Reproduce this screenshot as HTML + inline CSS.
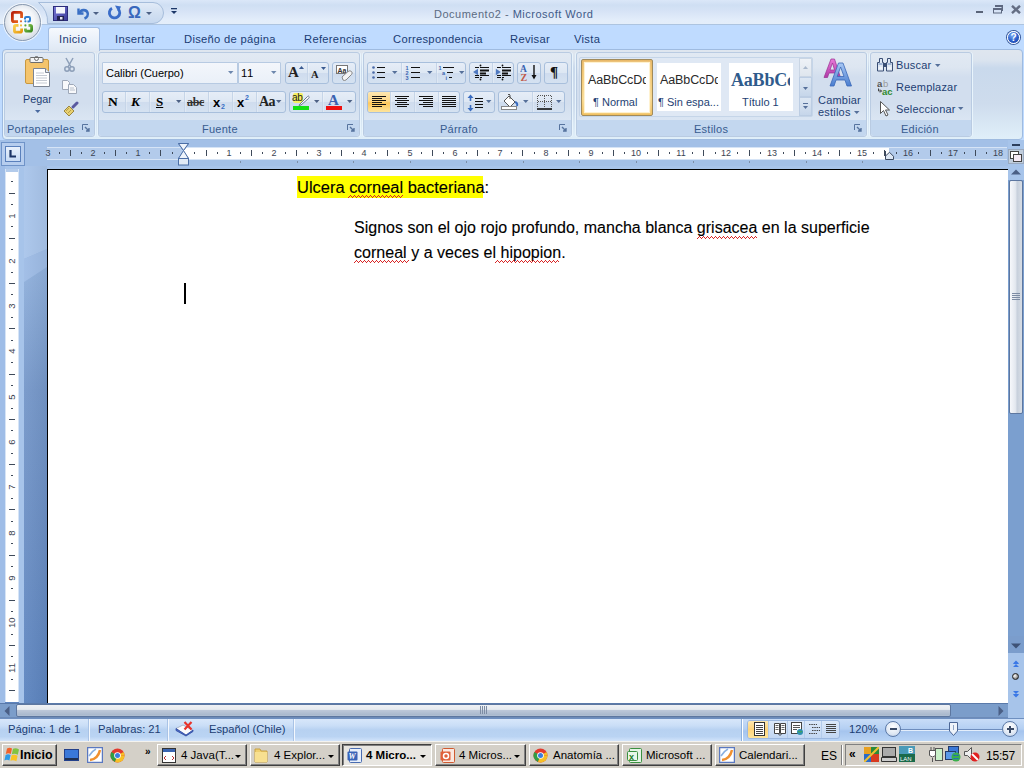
<!DOCTYPE html>
<html><head><meta charset="utf-8">
<style>
*{margin:0;padding:0;box-sizing:border-box}
html,body{width:1024px;height:768px;overflow:hidden;background:#bfdbff;font-family:"Liberation Sans",sans-serif;position:relative}
.a{position:absolute}
#title{left:0;top:0;width:1024px;height:25px;background:linear-gradient(#dbe7f8 0,#cfdff3 5px,#d6e3f6 11px,#e3edfa 20px,#e4eefa 24px);border-bottom:1px solid #adc4e0}
#tabs{left:0;top:25px;width:1024px;height:25px;background:#bfdbff}
#ribbon{left:2px;top:49px;width:1021px;height:91px;border:1px solid #9fbbe0;border-radius:4px;background:linear-gradient(#dfe6ef 0,#dbe4ef 10px,#c9d9ec 18px,#cedced 60%,#e0eff9 100%)}
#below{left:0;top:140px;width:1024px;height:26px;background:#a3c0e7}
#docbg{left:0;top:166px;width:1008px;height:537px;background:linear-gradient(#a8c4ea 0,#93b2de 22%,#7597c9 47%,#6a8ec4 70%,#5c84bf 100%);border-left:5px solid #9fbde7}
#page{left:47px;top:169px;width:961px;height:534px;background:#fff;border-left:1px solid #000;border-top:1px solid #000}
#vscroll{left:1008px;top:140px;width:16px;height:578px;background:#a7c4ea}
#hscroll{left:0;top:703px;width:1008px;height:15px;background:#7b9dca;border-top:1px solid #5a7aaa;border-bottom:1px solid #6d8bb8}
#status{left:0;top:718px;width:1024px;height:23px;background:linear-gradient(#d8e7fa 0,#cadef7 30%,#b7d1f1 50%,#bad4f3 80%,#d2e4fb 100%);border-top:1px solid #6e8fc0}
#taskbar{left:0;top:741px;width:1024px;height:27px;background:#d4d0c8;border-top:1px solid #f4f3ef}
.doc{font-family:"Liberation Sans",sans-serif;font-size:15.8px;color:#000;white-space:nowrap;line-height:20px;transform-origin:0 0;-webkit-text-stroke:0.1px #000}
.grp{top:52px;height:85px;border:1px solid #b9cbe2;border-radius:3px;background:linear-gradient(#e1e9f3 0,#dde6f1 14px,#d2deee 24px,#d2deee 50px,#dbe6f3 68px);box-shadow:1px 0 0 #e8f4fc,-1px 0 0 #e8f4fc}
.glab{position:absolute;left:0;right:0;bottom:0;height:16px;background:#c3d7ef;border-radius:0 0 3px 3px}
.gl{top:123px;font-size:11px;letter-spacing:0.25px;color:#375b90;white-space:nowrap}
.combo{height:22px;border:1px solid #b7cae2;background:linear-gradient(#f3f6fb,#eaf0f8);border-radius:1px}
.strip{border:1px solid #a8bfdc;border-radius:3px;background:linear-gradient(#e6edf7 0,#dde7f3 48%,#cfdcee 52%,#d5e2f1 100%)}
.sep{width:1px;background:#c6d5e8;box-shadow:1px 0 0 rgba(255,255,255,.25)}
.sty{top:73px;height:18px;overflow:hidden;white-space:nowrap;font-size:12.5px;color:#2a2a2a;letter-spacing:-0.1px}
.styl{top:96px;font-size:11px;color:#1e3f73;white-space:nowrap}
.edt{left:896px;font-size:11px;color:#1e3f73;letter-spacing:0.2px;white-space:nowrap}
.rn{top:148px;width:20px;text-align:center;font-size:9px;color:#3b4352;line-height:11px}
.rnv{left:7px;width:10px;text-align:center;font-size:9.5px;color:#3b4352;line-height:10px;transform:rotate(-90deg)}
.stx{top:723px;font-size:11.2px;color:#1b3d73;white-space:nowrap}
.ssep{top:719px;width:2px;height:22px;border-left:1px solid #a9c3e6;border-right:1px solid #f4f8fd}
.zc{top:721px;width:16px;height:16px;border-radius:50%;border:1px solid #5c7aa8;background:radial-gradient(circle at 50% 35%,#fff,#dfe8f4 60%,#b5c8e2)}
.tbtn{top:744px;height:22px;border:1px solid;border-color:#fff #404040 #404040 #fff;box-shadow:inset -1px -1px 0 #808080;background:#d4d0c8}
.tbtn.act{border-color:#404040 #fff #fff #404040;box-shadow:inset 1px 1px 0 #808080;background:#e8e6e1}
.ttx{top:749px;font-size:11.5px;color:#000;white-space:nowrap}
.tab{top:33px;font-size:11.2px;letter-spacing:0.3px;color:#1a3b74;white-space:nowrap}
.wavy{text-decoration:underline wavy #e02020;text-decoration-thickness:1px;text-underline-offset:3px}
</style></head><body>
<div id="title" class="a"></div>
<div id="tabs" class="a"></div>
<div id="ribbon" class="a"></div>
<div id="below" class="a"></div>
<div id="docbg" class="a"></div>
<div id="page" class="a"></div>
<div id="vscroll" class="a"></div>
<div id="hscroll" class="a"></div>
<div id="status" class="a"></div>
<div id="taskbar" class="a"></div>


<!-- ribbon groups -->
<div class="a grp" style="left:4px;width:91px"><div class="glab"></div></div>
<div class="a gl" style="left:7px">Portapapeles</div>
<svg class="a" style="left:82px;top:124px" width="8" height="8" viewBox="0 0 8 8"><path d="M0.5 6V0.5H6" fill="none" stroke="#56739e"/><path d="M3 3L7 7M4 7h3V4" fill="none" stroke="#56739e" stroke-width="1.4"/></svg>
<div class="a grp" style="left:98px;width:262px"><div class="glab"></div></div>
<div class="a gl" style="left:202px">Fuente</div>
<svg class="a" style="left:347px;top:124px" width="8" height="8" viewBox="0 0 8 8"><path d="M0.5 6V0.5H6" fill="none" stroke="#56739e"/><path d="M3 3L7 7M4 7h3V4" fill="none" stroke="#56739e" stroke-width="1.4"/></svg>
<div class="a grp" style="left:363px;width:209px"><div class="glab"></div></div>
<div class="a gl" style="left:440px">Párrafo</div>
<svg class="a" style="left:559px;top:124px" width="8" height="8" viewBox="0 0 8 8"><path d="M0.5 6V0.5H6" fill="none" stroke="#56739e"/><path d="M3 3L7 7M4 7h3V4" fill="none" stroke="#56739e" stroke-width="1.4"/></svg>
<div class="a grp" style="left:576px;width:291px"><div class="glab"></div></div>
<div class="a gl" style="left:694px">Estilos</div>
<svg class="a" style="left:854px;top:124px" width="8" height="8" viewBox="0 0 8 8"><path d="M0.5 6V0.5H6" fill="none" stroke="#56739e"/><path d="M3 3L7 7M4 7h3V4" fill="none" stroke="#56739e" stroke-width="1.4"/></svg>
<div class="a grp" style="left:870px;width:102px"><div class="glab"></div></div>
<div class="a gl" style="left:901px">Edición</div>

<!-- Portapapeles content -->
<svg class="a" style="left:24px;top:56px" width="28" height="32" viewBox="0 0 28 32">
<rect x="1.5" y="3.5" width="23" height="24" rx="1.5" fill="#f4c46c" stroke="#c9983f"/>
<rect x="6" y="1.5" width="13" height="5" rx="1" fill="#f4f4f4" stroke="#6d6d6d"/>
<circle cx="12.5" cy="2.5" r="2" fill="none" stroke="#6d6d6d"/>
<path d="M9.5 12.5h12l4 4v14h-16z" fill="#fff" stroke="#7c8594"/>
<path d="M21.5 12.5v4h4" fill="#e8ecf2" stroke="#7c8594"/>
<path d="M12 17h8M12 19.5h11M12 22h11M12 24.5h11M12 27h11" stroke="#c5cad2" stroke-width="1"/>
</svg>
<div class="a" style="left:23px;top:93px;font-size:10.8px;color:#1e3f73">Pegar</div>
<svg class="a" style="left:35px;top:110px" width="6" height="3"><path d="M0 0h5.5L2.75 3z" fill="#4a6aa0"/></svg>
<svg class="a" style="left:64px;top:57px" width="11" height="15" viewBox="0 0 11 15"><path d="M2 1L7 10M9 1L4 10" stroke="#8d9fb8" stroke-width="1.5"/><circle cx="3" cy="12" r="2.2" fill="none" stroke="#8d9fb8" stroke-width="1.5"/><circle cx="8" cy="12" r="2.2" fill="none" stroke="#8d9fb8" stroke-width="1.5"/></svg>
<svg class="a" style="left:62px;top:80px" width="16" height="14" viewBox="0 0 16 14"><path d="M0.5 0.5h5l2 2v7h-7z" fill="#f8f9fb" stroke="#9ea8b8"/><path d="M6.5 4.5h5l3 3v6h-8z" fill="#f8f9fb" stroke="#9ea8b8"/><path d="M8 8h4M8 10h5" stroke="#b8c0cc"/></svg>
<svg class="a" style="left:63px;top:101px" width="16" height="16" viewBox="0 0 16 16"><path d="M10 6L14 2" stroke="#5a5aa0" stroke-width="3" stroke-linecap="round"/><path d="M1 10L6 5 11 10 6 15z" fill="#e8d070" stroke="#9a8640"/><path d="M3 10L6 7M5 12L8 9" stroke="#b8a048"/></svg>

<!-- Fuente content -->
<div class="a combo" style="left:102px;top:62px;width:136px"></div>
<div class="a" style="left:106px;top:67px;font-size:11px;color:#000;white-space:nowrap">Calibri (Cuerpo)</div>
<svg class="a" style="left:228px;top:71px" width="6" height="3"><path d="M0 0h5.5L2.75 3z" fill="#6d87ad"/></svg>
<div class="a combo" style="left:238px;top:62px;width:43px"></div>
<div class="a" style="left:241px;top:67px;font-size:11.3px;color:#000;letter-spacing:0.6px">11</div>
<svg class="a" style="left:271px;top:71px" width="6" height="3"><path d="M0 0h5.5L2.75 3z" fill="#6d87ad"/></svg>
<div class="a strip" style="left:102px;top:91px;width:184px;height:22px"></div>
<div class="a sep" style="left:125px;top:92px;height:20px"></div>
<div class="a sep" style="left:149px;top:92px;height:20px"></div>
<div class="a sep" style="left:184px;top:92px;height:20px"></div>
<div class="a sep" style="left:208px;top:92px;height:20px"></div>
<div class="a sep" style="left:232px;top:92px;height:20px"></div>
<div class="a sep" style="left:256px;top:92px;height:20px"></div>
<div class="a" style="left:108px;top:94px;font-family:'Liberation Serif',serif;font-weight:bold;font-size:13.5px;color:#000">N</div>
<div class="a" style="left:131px;top:94px;font-family:'Liberation Serif',serif;font-weight:bold;font-style:italic;font-size:13.5px;color:#000">K</div>
<div class="a" style="left:156px;top:94px;font-family:'Liberation Serif',serif;font-weight:bold;font-size:13px;color:#000;text-decoration:underline;text-underline-offset:1px">S</div>
<svg class="a" style="left:176px;top:100px" width="6" height="3"><path d="M0 0h5.5L2.75 3z" fill="#4d6185"/></svg>
<div class="a" style="left:187px;top:95px;font-family:'Liberation Serif',serif;font-weight:bold;font-size:12px;color:#333;text-decoration:line-through;letter-spacing:-0.3px">abc</div>
<div class="a" style="left:213px;top:95px;font-weight:bold;font-size:13px;color:#000">x</div><div class="a" style="left:221px;top:103px;font-weight:bold;font-size:7px;color:#3a6fc4">2</div>
<div class="a" style="left:237px;top:95px;font-weight:bold;font-size:13px;color:#000">x</div><div class="a" style="left:245px;top:94px;font-weight:bold;font-size:7px;color:#3a6fc4">2</div>
<div class="a" style="left:259px;top:94px;font-family:'Liberation Serif',serif;font-weight:bold;font-size:14px;color:#222;letter-spacing:-0.5px">Aa</div>
<svg class="a" style="left:276px;top:100px" width="6" height="3"><path d="M0 0h5.5L2.75 3z" fill="#4d6185"/></svg>
<div class="a strip" style="left:285px;top:62px;width:44px;height:22px"></div>
<div class="a sep" style="left:307px;top:63px;height:20px"></div>
<div class="a" style="left:288px;top:64px;font-family:'Liberation Serif',serif;font-weight:bold;font-size:15px;color:#222">A</div>
<svg class="a" style="left:299px;top:66px" width="5" height="3"><path d="M0 3h5L2.5 0z" fill="#3a5a90"/></svg>
<div class="a" style="left:311px;top:69px;font-family:'Liberation Serif',serif;font-weight:bold;font-size:10.5px;color:#222">A</div>
<svg class="a" style="left:321px;top:67px" width="5" height="3"><path d="M0 0h5L2.5 3z" fill="#3a5a90"/></svg>
<div class="a strip" style="left:332px;top:62px;width:24px;height:22px"></div>
<svg class="a" style="left:335px;top:64px" width="19" height="17" viewBox="0 0 19 17"><rect x="1.5" y="1.5" width="11" height="8" fill="#fff" stroke="#777"/><text x="2.5" y="8.5" font-size="7" font-family="Liberation Sans" font-weight="bold" fill="#333">Aa</text><path d="M7 13L13 7.5Q15 6 16.5 7.5Q18 9 16.5 10.5L11 16Q9 17 8 16z" fill="#f4f4f4" stroke="#888"/></svg>
<div class="a strip" style="left:289px;top:91px;width:67px;height:22px"></div>
<div class="a sep" style="left:322px;top:92px;height:20px"></div>
<div class="a" style="left:293px;top:93px;width:10px;height:10px;background:#f6f060;border-radius:2px"></div>
<div class="a" style="left:292px;top:92px;font-size:10px;color:#222;letter-spacing:-0.4px">ab</div>
<svg class="a" style="left:298px;top:94px" width="12" height="12" viewBox="0 0 12 12"><path d="M2 10L9.5 2.5Q10.5 1.5 11 2.5Q11.5 3.5 10.5 4.5L3 11L1 11.5z" fill="#fff" stroke="#6a7a90"/></svg>
<div class="a" style="left:293px;top:106px;width:16px;height:4px;background:#14e014"></div>
<svg class="a" style="left:314px;top:100px" width="6" height="3"><path d="M0 0h5.5L2.75 3z" fill="#4d6185"/></svg>
<div class="a" style="left:328px;top:92px;font-family:'Liberation Serif',serif;font-size:15px;font-weight:bold;color:#3a62b0">A</div>
<div class="a" style="left:326px;top:106px;width:16px;height:4px;background:#ee1010"></div>
<svg class="a" style="left:347px;top:100px" width="6" height="3"><path d="M0 0h5.5L2.75 3z" fill="#4d6185"/></svg>

<!-- Parrafo content -->
<div class="a strip" style="left:367px;top:62px;width:99px;height:22px"></div>
<div class="a sep" style="left:401px;top:63px;height:20px"></div><div class="a sep" style="left:436px;top:63px;height:20px"></div>
<svg class="a" style="left:372px;top:66px" width="14" height="13" viewBox="0 0 14 13"><circle cx="1.5" cy="1.5" r="1.3" fill="#4a6aa8"/><circle cx="1.5" cy="6.5" r="1.3" fill="#4a6aa8"/><circle cx="1.5" cy="11.5" r="1.3" fill="#4a6aa8"/><path d="M5 1.5h8M5 6.5h8M5 11.5h8" stroke="#111" stroke-width="1.2"/></svg>
<svg class="a" style="left:392px;top:71px" width="6" height="3"><path d="M0 0h5.5L2.75 3z" fill="#56709a"/></svg>
<svg class="a" style="left:405px;top:65px" width="16" height="15" viewBox="0 0 16 15"><text x="0.5" y="5" font-size="5.5" font-weight="bold" font-family="Liberation Sans" fill="#3a64b0">1</text><text x="0.5" y="10" font-size="5.5" font-weight="bold" font-family="Liberation Sans" fill="#3a64b0">2</text><text x="0.5" y="15" font-size="5.5" font-weight="bold" font-family="Liberation Sans" fill="#3a64b0">3</text><path d="M6 2.5h9M6 7.5h9M6 12.5h9" stroke="#111" stroke-width="1"/></svg>
<svg class="a" style="left:427px;top:71px" width="6" height="3"><path d="M0 0h5.5L2.75 3z" fill="#56709a"/></svg>
<svg class="a" style="left:438px;top:65px" width="17" height="15" viewBox="0 0 17 15"><text x="0.5" y="5" font-size="5.5" font-weight="bold" font-family="Liberation Sans" fill="#3a64b0">1</text><text x="4" y="10" font-size="5.5" font-weight="bold" font-family="Liberation Sans" fill="#3a64b0">a</text><text x="7.5" y="15" font-size="5.5" font-weight="bold" font-family="Liberation Sans" fill="#3a64b0">i</text><path d="M5 2.5h11M9 7.5h6M11 12.5h3" stroke="#111" stroke-width="1"/></svg>
<svg class="a" style="left:459px;top:71px" width="6" height="3"><path d="M0 0h5.5L2.75 3z" fill="#56709a"/></svg>
<div class="a strip" style="left:469px;top:62px;width:45px;height:22px"></div><div class="a sep" style="left:492px;top:63px;height:20px"></div>
<svg class="a" style="left:473px;top:64px" width="17" height="17" viewBox="0 0 17 17"><circle cx="7.5" cy="1.5" r="0.9" fill="#111"/><circle cx="7.5" cy="15.5" r="0.9" fill="#111"/><path d="M2 3.5h4M2 11.5h4M2 13.5h4M7 3.5h9M7 11.5h9M7 13.5h2" stroke="#111" stroke-width="1"/><path d="M7 6.5h9M7 9.5h6" stroke="#111" stroke-width="2"/><path d="M0 8L5 4.8V11.2z" fill="#4f79c0"/></svg>
<svg class="a" style="left:495px;top:64px" width="17" height="17" viewBox="0 0 17 17"><circle cx="7.5" cy="1.5" r="0.9" fill="#111"/><circle cx="7.5" cy="15.5" r="0.9" fill="#111"/><path d="M2 3.5h4M2 11.5h4M2 13.5h4M7 3.5h9M7 11.5h9M7 13.5h2" stroke="#111" stroke-width="1"/><path d="M7 6.5h9M7 9.5h6" stroke="#111" stroke-width="2"/><path d="M5.8 8L0.8 4.8V11.2z" fill="#4f79c0"/></svg>
<div class="a strip" style="left:517px;top:62px;width:24px;height:22px"></div>
<svg class="a" style="left:520px;top:64px" width="18" height="18" viewBox="0 0 18 18"><text x="0" y="8" font-size="9.5" font-weight="bold" font-family="Liberation Serif" fill="#3a64b0">A</text><text x="0.5" y="17" font-size="10" font-weight="bold" font-family="Liberation Serif" fill="#c05a48">Z</text><path d="M14 1v13" stroke="#111" stroke-width="1.4"/><path d="M11.5 11l2.5 4.5 2.5-4.5z" fill="#111"/></svg>
<div class="a strip" style="left:544px;top:62px;width:24px;height:22px"></div>
<div class="a" style="left:550px;top:64px;font-family:'Liberation Serif',serif;font-size:15px;font-weight:bold;color:#111">&#182;</div>
<div class="a strip" style="left:367px;top:91px;width:93px;height:22px"></div>
<div class="a" style="left:368px;top:92px;width:22px;height:20px;background:linear-gradient(#fde7b0 0,#fdd88a 45%,#ffc85a 55%,#fde49c 100%);border-radius:2px 0 0 2px"></div>
<div class="a sep" style="left:390px;top:92px;height:20px"></div><div class="a sep" style="left:414px;top:92px;height:20px"></div><div class="a sep" style="left:438px;top:92px;height:20px"></div>
<svg class="a" style="left:372px;top:96px" width="15" height="12"><path d="M0 0.5h14M0 2.5h10M0 4.5h14M0 6.5h10M0 8.5h14M0 10.5h10" stroke="#111" stroke-width="1"/></svg>
<svg class="a" style="left:395px;top:96px" width="15" height="12"><path d="M0 0.5h14M2 2.5h10M0 4.5h14M2 6.5h10M0 8.5h14M2 10.5h10" stroke="#111" stroke-width="1"/></svg>
<svg class="a" style="left:419px;top:96px" width="15" height="12"><path d="M0 0.5h14M4 2.5h10M0 4.5h14M4 6.5h10M0 8.5h14M4 10.5h10" stroke="#111" stroke-width="1"/></svg>
<svg class="a" style="left:442px;top:96px" width="15" height="12"><path d="M0 0.5h14M0 2.5h14M0 4.5h14M0 6.5h14M0 8.5h14M0 10.5h14" stroke="#111" stroke-width="1"/></svg>
<div class="a strip" style="left:463px;top:91px;width:32px;height:22px"></div>
<svg class="a" style="left:467px;top:94px" width="17" height="18" viewBox="0 0 17 18"><path d="M3.5 3v4M3.5 11v4" stroke="#3a6cc0" stroke-width="1.6"/><path d="M0.5 4L3.5 0.5 6.5 4zM0.5 14L3.5 17.5 6.5 14z" fill="#3a6cc0"/><path d="M8 4.5h8M8 7.5h8M8 10.5h8M8 13.5h8" stroke="#111" stroke-width="1.2"/></svg>
<svg class="a" style="left:486px;top:100px" width="6" height="3"><path d="M0 0h5.5L2.75 3z" fill="#56709a"/></svg>
<div class="a strip" style="left:498px;top:91px;width:67px;height:22px"></div><div class="a sep" style="left:532px;top:92px;height:20px"></div>
<svg class="a" style="left:501px;top:93px" width="18" height="18" viewBox="0 0 18 18"><path d="M3 8L8 3l6 6-5 5z" fill="#fff" stroke="#555"/><path d="M7 2q1-2 2 0v4" fill="none" stroke="#555"/><path d="M14 9q3 1 2 4" fill="none" stroke="#3a6cc0" stroke-width="2"/><rect x="0.5" y="13.5" width="15" height="3" fill="#fff" stroke="#888"/></svg>
<svg class="a" style="left:523px;top:100px" width="6" height="3"><path d="M0 0h5.5L2.75 3z" fill="#56709a"/></svg>
<svg class="a" style="left:537px;top:95px" width="15" height="15" viewBox="0 0 15 15"><path d="M0.5 1v12M7.5 1v12M14.5 1v12M1 0.5h13M1 6.5h13" stroke="#555" stroke-width="1" stroke-dasharray="1 1" fill="none"/><path d="M0 14h15" stroke="#111" stroke-width="1.6"/></svg>
<svg class="a" style="left:556px;top:100px" width="6" height="3"><path d="M0 0h5.5L2.75 3z" fill="#56709a"/></svg>

<!-- Estilos content -->
<div class="a" style="left:579px;top:57px;width:234px;height:60px;border:1px solid #c5d5e8;border-radius:2px;background:#dfe8f4"></div>
<div class="a" style="left:581px;top:59px;width:72px;height:57px;border-radius:2px;border:1px solid #a08a5c;background:linear-gradient(#e8b868,#f3c874 30%,#f8d890 70%,#f0c060);"></div>
<div class="a" style="left:585px;top:63px;width:64px;height:49px;background:#fff;box-shadow:0 0 1px 1px #fff2d0"></div>
<div class="a sty" style="left:585px;width:61px"><span style="margin-left:3px">AaBbCcDd</span></div>
<div class="a styl" style="left:593px">&#182; Normal</div>
<div class="a" style="left:657px;top:63px;width:64px;height:48px;background:#fff"></div>
<div class="a sty" style="left:657px;width:61px"><span style="margin-left:3px">AaBbCcDd</span></div>
<div class="a styl" style="left:658px">&#182; Sin espa...</div>
<div class="a" style="left:729px;top:63px;width:64px;height:48px;background:#fff"></div>
<div class="a" style="left:729px;top:70px;width:61px;height:22px;overflow:hidden;white-space:nowrap"><span style="margin-left:2px;font-family:'Liberation Serif',serif;font-weight:bold;font-size:18px;color:#2f5b8c;letter-spacing:-0.2px">AaBbCc</span></div>
<div class="a styl" style="left:742px">Título 1</div>
<div class="a" style="left:799px;top:58px;width:14px;height:58px;border-left:1px solid #c5d5e8"></div>
<div class="a" style="left:799px;top:58px;width:13px;height:19px;background:linear-gradient(#eef2f7,#dfe6ee);border:1px solid #c9d5e4"></div>
<svg class="a" style="left:803px;top:66px" width="5" height="3"><path d="M0 3h5L2.5 0z" fill="#a9b8cc"/></svg>
<div class="a" style="left:799px;top:77px;width:13px;height:20px;background:linear-gradient(#dde7f3,#c6d6ea);border:1px solid #bccde3"></div>
<svg class="a" style="left:803px;top:87px" width="5" height="3"><path d="M0 0h5L2.5 3z" fill="#56709a"/></svg>
<div class="a" style="left:799px;top:97px;width:13px;height:19px;background:linear-gradient(#dde7f3,#c6d6ea);border:1px solid #bccde3"></div>
<svg class="a" style="left:803px;top:103px" width="5" height="7"><rect x="0" y="0" width="5" height="1" fill="#56709a"/><path d="M0 3h5L2.5 6z" fill="#56709a"/></svg>
<svg class="a" style="left:823px;top:58px" width="32" height="29" viewBox="0 0 32 29"><defs><linearGradient id="pa" x1="0" y1="0" x2="0" y2="1"><stop offset="0" stop-color="#e87ad8"/><stop offset="1" stop-color="#b03aa8"/></linearGradient><linearGradient id="ba" x1="0" y1="0" x2="0" y2="1"><stop offset="0" stop-color="#a8c8f4"/><stop offset="1" stop-color="#4a7ed0"/></linearGradient></defs>
<path d="M1 19.5L8 1h3.5l6 18.5h-3.5l-1.5-4.5H6l-1.5 4.5zM7 12h4.5L9.5 5z" fill="url(#pa)" stroke="#9a3090" stroke-width="0.7"/>
<path d="M7 28L15.5 5h4.5L28.5 28h-4.5l-2-6H13l-2 6zM14.2 18.5h6.8L17.6 9z" fill="url(#ba)" stroke="#3a68b8" stroke-width="0.8"/></svg>
<div class="a" style="left:818px;top:94px;font-size:11px;letter-spacing:0.2px;color:#1e3f73">Cambiar</div>
<div class="a" style="left:818px;top:106px;font-size:11px;letter-spacing:0.2px;color:#1e3f73">estilos</div>
<svg class="a" style="left:854px;top:111px" width="6" height="3"><path d="M0 0h5.5L2.75 3z" fill="#56709a"/></svg>

<!-- Edicion content -->
<svg class="a" style="left:877px;top:57px" width="16" height="15" viewBox="0 0 16 15"><path d="M2.5 1.5h3v4h1v8.5h-6V5.5h2z" fill="#dfe8f4" stroke="#3a4f75"/><path d="M10.5 1.5h3v4h2v8.5h-6V5.5h1z" fill="#dfe8f4" stroke="#3a4f75"/><rect x="6.5" y="6" width="3" height="4" fill="#3a4f75"/><path d="M1.5 7h4M10.5 7h4" stroke="#8aa4cc" stroke-width="1.5"/><path d="M1.5 11h4M10.5 11h4" stroke="#ffffff"/></svg>
<div class="a edt" style="top:59px">Buscar</div>
<svg class="a" style="left:935px;top:64px" width="6" height="3"><path d="M0 0h5.5L2.75 3z" fill="#56709a"/></svg>
<svg class="a" style="left:877px;top:79px" width="18" height="16" viewBox="0 0 18 16"><text x="0" y="8" font-size="9.5" font-family="Liberation Sans" font-weight="bold" fill="#555">a</text><text x="6" y="8" font-size="9.5" font-family="Liberation Sans" fill="#9a9a9a">b</text><text x="5" y="15.5" font-size="9.5" font-family="Liberation Sans" font-weight="bold" fill="#2f8a2f">ac</text><path d="M1.5 9.5v2.5h3M3 10.5l1.5 1.5-1.5 1.5" fill="none" stroke="#444" stroke-width="1"/></svg>
<div class="a edt" style="top:81px">Reemplazar</div>
<svg class="a" style="left:880px;top:101px" width="10" height="16" viewBox="0 0 10 16"><path d="M0.5 0.5v12l3-3 2.5 5.5 2-1-2.5-5H9.5z" fill="#fff" stroke="#555"/></svg>
<div class="a edt" style="top:103px">Seleccionar</div>
<svg class="a" style="left:958px;top:107px" width="6" height="3"><path d="M0 0h5.5L2.75 3z" fill="#56709a"/></svg>

<svg class="a" style="left:24px;top:166px" width="23" height="537" viewBox="0 0 23 537"><defs><linearGradient id="dbg" x1="0" y1="0" x2="0" y2="1"><stop offset="0" stop-color="#93b3de"/><stop offset="0.3" stop-color="#7597c9"/><stop offset="0.65" stop-color="#6a8ec4"/><stop offset="1" stop-color="#5c84bf"/></linearGradient><linearGradient id="dbh" x1="0" y1="0" x2="1" y2="0"><stop offset="0" stop-color="#fff" stop-opacity="0.05"/><stop offset="1" stop-color="#000" stop-opacity="0.05"/></linearGradient></defs>
<rect x="0" y="90" width="23" height="447" fill="url(#dbg)"/>
<path d="M0 0H23V83L0 93z" fill="#a9c5eb"/>
<path d="M0 93L23 83V101L0 116z" fill="#9ebce6"/>
<rect x="0" y="0" width="23" height="537" fill="url(#dbh)"/></svg>
<!-- ruler -->
<div class="a" style="left:1px;top:142px;width:24px;height:24px;border:1px solid #6f93c8;background:#b6cdee"></div>
<div class="a" style="left:5px;top:146px;width:16px;height:16px;border:1px solid #5a80bc;background:linear-gradient(#e9f1fc,#c8dbf4)"></div>
<svg class="a" style="left:9px;top:150px" width="8" height="8"><path d="M1.5 0v6.5H7" fill="none" stroke="#1d3566" stroke-width="2.2"/></svg>
<div class="a" style="left:47px;top:147px;width:960px;height:13px;background:#b3cbeb;border-top:1px solid #d6e4f6;border-bottom:1px solid #d6e4f6"></div>
<div class="a" style="left:184px;top:148px;width:705px;height:11px;background:#fff"></div>
<div class="a rn" style="left:38px">3</div><div class="a" style="left:59px;top:152px;width:1px;height:2px;background:#3f4a5a"></div><div class="a" style="left:70px;top:150px;width:1px;height:6px;background:#3f4a5a"></div><div class="a" style="left:81px;top:152px;width:1px;height:2px;background:#3f4a5a"></div><div class="a rn" style="left:83px">2</div><div class="a" style="left:104px;top:152px;width:1px;height:2px;background:#3f4a5a"></div><div class="a" style="left:115px;top:150px;width:1px;height:6px;background:#3f4a5a"></div><div class="a" style="left:126px;top:152px;width:1px;height:2px;background:#3f4a5a"></div><div class="a rn" style="left:128px">1</div><div class="a" style="left:149px;top:152px;width:1px;height:2px;background:#3f4a5a"></div><div class="a" style="left:160px;top:150px;width:1px;height:6px;background:#3f4a5a"></div><div class="a" style="left:172px;top:152px;width:1px;height:2px;background:#3f4a5a"></div><div class="a" style="left:194px;top:152px;width:1px;height:2px;background:#3f4a5a"></div><div class="a" style="left:206px;top:150px;width:1px;height:6px;background:#3f4a5a"></div><div class="a" style="left:217px;top:152px;width:1px;height:2px;background:#3f4a5a"></div><div class="a rn" style="left:219px">1</div><div class="a" style="left:240px;top:152px;width:1px;height:2px;background:#3f4a5a"></div><div class="a" style="left:251px;top:150px;width:1px;height:6px;background:#3f4a5a"></div><div class="a" style="left:262px;top:152px;width:1px;height:2px;background:#3f4a5a"></div><div class="a rn" style="left:264px">2</div><div class="a" style="left:285px;top:152px;width:1px;height:2px;background:#3f4a5a"></div><div class="a" style="left:296px;top:150px;width:1px;height:6px;background:#3f4a5a"></div><div class="a" style="left:307px;top:152px;width:1px;height:2px;background:#3f4a5a"></div><div class="a rn" style="left:309px">3</div><div class="a" style="left:330px;top:152px;width:1px;height:2px;background:#3f4a5a"></div><div class="a" style="left:341px;top:150px;width:1px;height:6px;background:#3f4a5a"></div><div class="a" style="left:353px;top:152px;width:1px;height:2px;background:#3f4a5a"></div><div class="a rn" style="left:354px">4</div><div class="a" style="left:375px;top:152px;width:1px;height:2px;background:#3f4a5a"></div><div class="a" style="left:387px;top:150px;width:1px;height:6px;background:#3f4a5a"></div><div class="a" style="left:398px;top:152px;width:1px;height:2px;background:#3f4a5a"></div><div class="a rn" style="left:400px">5</div><div class="a" style="left:421px;top:152px;width:1px;height:2px;background:#3f4a5a"></div><div class="a" style="left:432px;top:150px;width:1px;height:6px;background:#3f4a5a"></div><div class="a" style="left:443px;top:152px;width:1px;height:2px;background:#3f4a5a"></div><div class="a rn" style="left:445px">6</div><div class="a" style="left:466px;top:152px;width:1px;height:2px;background:#3f4a5a"></div><div class="a" style="left:477px;top:150px;width:1px;height:6px;background:#3f4a5a"></div><div class="a" style="left:488px;top:152px;width:1px;height:2px;background:#3f4a5a"></div><div class="a rn" style="left:490px">7</div><div class="a" style="left:511px;top:152px;width:1px;height:2px;background:#3f4a5a"></div><div class="a" style="left:522px;top:150px;width:1px;height:6px;background:#3f4a5a"></div><div class="a" style="left:534px;top:152px;width:1px;height:2px;background:#3f4a5a"></div><div class="a rn" style="left:536px">8</div><div class="a" style="left:556px;top:152px;width:1px;height:2px;background:#3f4a5a"></div><div class="a" style="left:568px;top:150px;width:1px;height:6px;background:#3f4a5a"></div><div class="a" style="left:579px;top:152px;width:1px;height:2px;background:#3f4a5a"></div><div class="a rn" style="left:581px">9</div><div class="a" style="left:602px;top:152px;width:1px;height:2px;background:#3f4a5a"></div><div class="a" style="left:613px;top:150px;width:1px;height:6px;background:#3f4a5a"></div><div class="a" style="left:624px;top:152px;width:1px;height:2px;background:#3f4a5a"></div><div class="a rn" style="left:626px">10</div><div class="a" style="left:647px;top:152px;width:1px;height:2px;background:#3f4a5a"></div><div class="a" style="left:658px;top:150px;width:1px;height:6px;background:#3f4a5a"></div><div class="a" style="left:669px;top:152px;width:1px;height:2px;background:#3f4a5a"></div><div class="a rn" style="left:671px">11</div><div class="a" style="left:692px;top:152px;width:1px;height:2px;background:#3f4a5a"></div><div class="a" style="left:703px;top:150px;width:1px;height:6px;background:#3f4a5a"></div><div class="a" style="left:715px;top:152px;width:1px;height:2px;background:#3f4a5a"></div><div class="a rn" style="left:716px">12</div><div class="a" style="left:737px;top:152px;width:1px;height:2px;background:#3f4a5a"></div><div class="a" style="left:749px;top:150px;width:1px;height:6px;background:#3f4a5a"></div><div class="a" style="left:760px;top:152px;width:1px;height:2px;background:#3f4a5a"></div><div class="a rn" style="left:762px">13</div><div class="a" style="left:783px;top:152px;width:1px;height:2px;background:#3f4a5a"></div><div class="a" style="left:794px;top:150px;width:1px;height:6px;background:#3f4a5a"></div><div class="a" style="left:805px;top:152px;width:1px;height:2px;background:#3f4a5a"></div><div class="a rn" style="left:807px">14</div><div class="a" style="left:828px;top:152px;width:1px;height:2px;background:#3f4a5a"></div><div class="a" style="left:839px;top:150px;width:1px;height:6px;background:#3f4a5a"></div><div class="a" style="left:850px;top:152px;width:1px;height:2px;background:#3f4a5a"></div><div class="a rn" style="left:852px">15</div><div class="a" style="left:873px;top:152px;width:1px;height:2px;background:#3f4a5a"></div><div class="a" style="left:884px;top:150px;width:1px;height:6px;background:#3f4a5a"></div><div class="a" style="left:896px;top:152px;width:1px;height:2px;background:#3f4a5a"></div><div class="a rn" style="left:898px">16</div><div class="a" style="left:918px;top:152px;width:1px;height:2px;background:#3f4a5a"></div><div class="a" style="left:930px;top:150px;width:1px;height:6px;background:#3f4a5a"></div><div class="a" style="left:941px;top:152px;width:1px;height:2px;background:#3f4a5a"></div><div class="a rn" style="left:943px">17</div><div class="a" style="left:964px;top:152px;width:1px;height:2px;background:#3f4a5a"></div><div class="a" style="left:975px;top:150px;width:1px;height:6px;background:#3f4a5a"></div><div class="a" style="left:986px;top:152px;width:1px;height:2px;background:#3f4a5a"></div><div class="a rn" style="left:988px">18</div>
<div class="a" style="left:240px;top:161px;width:1px;height:2px;background:#7d8ea8"></div><div class="a" style="left:297px;top:161px;width:1px;height:2px;background:#7d8ea8"></div><div class="a" style="left:353px;top:161px;width:1px;height:2px;background:#7d8ea8"></div><div class="a" style="left:410px;top:161px;width:1px;height:2px;background:#7d8ea8"></div><div class="a" style="left:466px;top:161px;width:1px;height:2px;background:#7d8ea8"></div><div class="a" style="left:523px;top:161px;width:1px;height:2px;background:#7d8ea8"></div><div class="a" style="left:579px;top:161px;width:1px;height:2px;background:#7d8ea8"></div><div class="a" style="left:636px;top:161px;width:1px;height:2px;background:#7d8ea8"></div><div class="a" style="left:693px;top:161px;width:1px;height:2px;background:#7d8ea8"></div><div class="a" style="left:749px;top:161px;width:1px;height:2px;background:#7d8ea8"></div><div class="a" style="left:806px;top:161px;width:1px;height:2px;background:#7d8ea8"></div><div class="a" style="left:862px;top:161px;width:1px;height:2px;background:#7d8ea8"></div>
<svg class="a" style="left:178px;top:143px" width="11" height="23" viewBox="0 0 11 23"><path d="M0.5 0.5h10L5.5 7.5zM0.5 15.5h10v0L5.5 8.5z" fill="#fff" stroke="#4b6ea6"/><path d="M0.5 0.5h10L5.5 7.5z" fill="#eef4fb" stroke="#4b6ea6"/><path d="M5.5 7.5L0.5 15.5h10z" fill="#eef4fb" stroke="#4b6ea6"/><rect x="0.5" y="15.5" width="10" height="6.5" fill="#e0eaf6" stroke="#4b6ea6"/></svg>
<svg class="a" style="left:885px;top:151px" width="10" height="10" viewBox="0 0 10 10"><path d="M0.5 5L4.5 1.3 8.5 5.3V8.5H0.5z" fill="#dde7f4"/><path d="M0.5 0V8.5H8.5V5.3L4.5 1.3 0.5 5" fill="none" stroke="#3c4a60"/></svg>
<div class="a" style="left:1012px;top:144px;width:8px;height:2px;background:#2c3e5c"></div>
<div class="a" style="left:1008px;top:149px;width:16px;height:15px;background:#c0cddc;border:1px solid #9aaac0"></div>
<svg class="a" style="left:1009px;top:150px" width="14" height="13" viewBox="0 0 14 13"><rect x="1.5" y="1.5" width="8" height="7" fill="#fff" stroke="#444"/><rect x="4.5" y="4.5" width="8" height="7" fill="#f4eaf4" stroke="#444"/></svg>
<div class="a" style="left:5px;top:169px;width:14px;height:533px;background:#fff;border-left:1px solid #d6e4f6;border-right:1px solid #d6e4f6"></div>
<div class="a" style="left:6px;top:169px;width:12px;height:3px;background:#b3cbeb"></div>
<div class="a" style="left:19px;top:169px;width:5px;height:534px;background:#a7c4ea"></div>
<div class="a" style="left:11px;top:181px;width:2px;height:1px;background:#3f4a5a"></div><div class="a" style="left:9px;top:193px;width:6px;height:1px;background:#3f4a5a"></div><div class="a" style="left:11px;top:204px;width:2px;height:1px;background:#3f4a5a"></div><div class="a rnv" style="top:211px">1</div><div class="a" style="left:11px;top:226px;width:2px;height:1px;background:#3f4a5a"></div><div class="a" style="left:9px;top:238px;width:6px;height:1px;background:#3f4a5a"></div><div class="a" style="left:11px;top:249px;width:2px;height:1px;background:#3f4a5a"></div><div class="a rnv" style="top:256px">2</div><div class="a" style="left:11px;top:272px;width:2px;height:1px;background:#3f4a5a"></div><div class="a" style="left:9px;top:283px;width:6px;height:1px;background:#3f4a5a"></div><div class="a" style="left:11px;top:294px;width:2px;height:1px;background:#3f4a5a"></div><div class="a rnv" style="top:301px">3</div><div class="a" style="left:11px;top:317px;width:2px;height:1px;background:#3f4a5a"></div><div class="a" style="left:9px;top:328px;width:6px;height:1px;background:#3f4a5a"></div><div class="a" style="left:11px;top:340px;width:2px;height:1px;background:#3f4a5a"></div><div class="a rnv" style="top:346px">4</div><div class="a" style="left:11px;top:362px;width:2px;height:1px;background:#3f4a5a"></div><div class="a" style="left:9px;top:374px;width:6px;height:1px;background:#3f4a5a"></div><div class="a" style="left:11px;top:385px;width:2px;height:1px;background:#3f4a5a"></div><div class="a rnv" style="top:392px">5</div><div class="a" style="left:11px;top:408px;width:2px;height:1px;background:#3f4a5a"></div><div class="a" style="left:9px;top:419px;width:6px;height:1px;background:#3f4a5a"></div><div class="a" style="left:11px;top:430px;width:2px;height:1px;background:#3f4a5a"></div><div class="a rnv" style="top:437px">6</div><div class="a" style="left:11px;top:453px;width:2px;height:1px;background:#3f4a5a"></div><div class="a" style="left:9px;top:464px;width:6px;height:1px;background:#3f4a5a"></div><div class="a" style="left:11px;top:475px;width:2px;height:1px;background:#3f4a5a"></div><div class="a rnv" style="top:482px">7</div><div class="a" style="left:11px;top:498px;width:2px;height:1px;background:#3f4a5a"></div><div class="a" style="left:9px;top:509px;width:6px;height:1px;background:#3f4a5a"></div><div class="a" style="left:11px;top:521px;width:2px;height:1px;background:#3f4a5a"></div><div class="a rnv" style="top:528px">8</div><div class="a" style="left:11px;top:543px;width:2px;height:1px;background:#3f4a5a"></div><div class="a" style="left:9px;top:555px;width:6px;height:1px;background:#3f4a5a"></div><div class="a" style="left:11px;top:566px;width:2px;height:1px;background:#3f4a5a"></div><div class="a rnv" style="top:573px">9</div><div class="a" style="left:11px;top:588px;width:2px;height:1px;background:#3f4a5a"></div><div class="a" style="left:9px;top:600px;width:6px;height:1px;background:#3f4a5a"></div><div class="a" style="left:11px;top:611px;width:2px;height:1px;background:#3f4a5a"></div><div class="a rnv" style="top:618px">10</div><div class="a" style="left:11px;top:634px;width:2px;height:1px;background:#3f4a5a"></div><div class="a" style="left:9px;top:645px;width:6px;height:1px;background:#3f4a5a"></div><div class="a" style="left:11px;top:656px;width:2px;height:1px;background:#3f4a5a"></div><div class="a rnv" style="top:663px">11</div><div class="a" style="left:11px;top:679px;width:2px;height:1px;background:#3f4a5a"></div><div class="a" style="left:9px;top:690px;width:6px;height:1px;background:#3f4a5a"></div>
<svg class="a" style="left:1011px;top:169px" width="10" height="6"><path d="M0 5.5L5 0.5 10 5.5z" fill="#4a5f85"/></svg>
<div class="a" style="left:1008px;top:180px;width:16px;height:456px;background:#7b9fcf"></div>
<div class="a" style="left:1009px;top:180px;width:14px;height:234px;border:1px solid #5d77a0;border-radius:2px;background:linear-gradient(90deg,#f6f8fb,#e3e8ef 45%,#c7d0dc 60%,#d8dee6)"></div>
<svg class="a" style="left:1012px;top:293px" width="8" height="8"><path d="M0 0.5h8M0 2.5h8M0 4.5h8M0 6.5h8" stroke="#7d8ca4"/></svg>
<div class="a" style="left:1008px;top:636px;width:16px;height:17px;background:#7b9dcc"></div>
<svg class="a" style="left:1011px;top:643px" width="10" height="6"><path d="M0 0.5L5 5.5 10 0.5z" fill="#3e5276"/></svg>
<svg class="a" style="left:1012px;top:660px" width="8" height="7" viewBox="0 0 8 7"><path d="M1 3.5L4 0.5 7 3.5zM1 7L4 4 7 7z" fill="#3b78e6"/><path d="M1.5 3.5h5" stroke="#3b78e6"/></svg>
<div class="a" style="left:1012px;top:673px;width:7px;height:7px;border-radius:50%;background:radial-gradient(circle at 35% 35%,#fff,#999 60%,#333);border:1px solid #222"></div>
<svg class="a" style="left:1012px;top:691px" width="8" height="7" viewBox="0 0 8 7"><path d="M1 0L4 3 7 0zM1 3.5L4 6.5 7 3.5z" fill="#3b78e6"/><path d="M1.5 3.5h5" stroke="#3b78e6"/></svg>
<svg class="a" style="left:4px;top:706px" width="6" height="10"><path d="M5.5 0L0.5 5 5.5 10z" fill="#4a5f85"/></svg>
<div class="a" style="left:16px;top:704px;width:935px;height:13px;border:1px solid #5d77a0;border-radius:2px;background:linear-gradient(#eef1f5,#e6eaef 40%,#bcc7d8 50%,#a9b8cd 90%,#b4c2d4)"></div>
<svg class="a" style="left:480px;top:706px" width="8" height="8"><path d="M0.5 0v8M2.5 0v8M4.5 0v8M6.5 0v8" stroke="#7d8ca4"/></svg>
<svg class="a" style="left:998px;top:706px" width="6" height="10"><path d="M0.5 0L5.5 5 0.5 10z" fill="#4a5f85"/></svg>

<!-- status bar -->
<div class="a stx" style="left:8px">Página: 1 de 1</div>
<div class="a ssep" style="left:88px"></div>
<div class="a stx" style="left:98px">Palabras: 21</div>
<div class="a ssep" style="left:167px"></div>
<svg class="a" style="left:175px;top:720px" width="19" height="17" viewBox="0 0 19 17"><path d="M1 8.5L8 5l10 5.5-7 5z" fill="#fafbfd" stroke="#9aa6bc" stroke-width="0.8"/><path d="M1 8.5v2l10 5.5 7-4.5v-1.5l-7 5z" fill="#4a6cc8" stroke="#2c48a0" stroke-width="0.8"/><path d="M9.5 2l7 7.5M16.5 2l-7 7.5" stroke="#e8332a" stroke-width="2.2"/></svg>
<div class="a stx" style="left:209px">Español (Chile)</div>
<div class="a ssep" style="left:293px"></div>
<div class="a" style="left:742px;top:719px;width:282px;height:22px;background:linear-gradient(#c9ddf7 0,#b4cff2 45%,#a5c4ee 55%,#b9d4f5 100%);border-left:1px solid #fff;box-shadow:-1px 0 0 #8db0dc"></div>
<div class="a" style="left:747px;top:720px;width:93px;height:19px;border:1px solid #9cb8e0;border-radius:3px;background:linear-gradient(#dbe8f9,#c2d7f3)"></div>
<div class="a" style="left:748px;top:721px;width:20px;height:17px;background:linear-gradient(#fde7b0,#ffd47a 50%,#fde49c);border-radius:2px 0 0 2px"></div>
<div class="a" style="left:768px;top:721px;width:1px;height:17px;background:#b3cbeb"></div><div class="a" style="left:787px;top:721px;width:1px;height:17px;background:#b3cbeb"></div><div class="a" style="left:804px;top:721px;width:1px;height:17px;background:#b3cbeb"></div><div class="a" style="left:821px;top:721px;width:1px;height:17px;background:#b3cbeb"></div>
<svg class="a" style="left:754px;top:722px" width="11" height="14" viewBox="0 0 11 14"><rect x="0.5" y="0.5" width="10" height="13" fill="#fff" stroke="#333"/><path d="M2 3.5h7M2 5.5h7M2 7.5h7M2 9.5h7M2 11.5h7" stroke="#444"/></svg>
<svg class="a" style="left:774px;top:722px" width="12" height="14" viewBox="0 0 12 14"><path d="M0.5 1.5h5v10h-5zM6.5 1.5h5v10h-5z" fill="#fff" stroke="#444"/><path d="M1.5 3.5h3M1.5 5.5h3M1.5 7.5h3M7.5 3.5h3M7.5 5.5h3M7.5 7.5h3" stroke="#666"/><path d="M4 11.5l2 2 2-2" fill="none" stroke="#444"/></svg>
<svg class="a" style="left:791px;top:722px" width="13" height="14" viewBox="0 0 13 14"><rect x="0.5" y="0.5" width="10" height="11" fill="#fff" stroke="#444"/><path d="M2 3.5h7M2 5.5h7M2 7.5h4" stroke="#555"/><circle cx="9" cy="10" r="3" fill="#2f8fb0"/><path d="M7 9.5q2 1 4 0" stroke="#4a4" fill="none"/></svg>
<svg class="a" style="left:809px;top:723px" width="11" height="12" viewBox="0 0 11 12"><path d="M0 1.5h8M3 4.5h8M3 7.5h8M0 10.5h8" stroke="#444" stroke-dasharray="1.5 0.8"/></svg>
<svg class="a" style="left:826px;top:723px" width="10" height="12" viewBox="0 0 10 12"><path d="M0 1.5h10M0 3.5h10M0 5.5h10M0 7.5h10M0 9.5h10" stroke="#444"/></svg>
<div class="a stx" style="left:849px">120%</div>
<div class="a" style="left:900px;top:729px;width:103px;height:1px;background:#6e8dbd;box-shadow:0 1px 0 #e4eefb"></div>
<div class="a zc" style="left:885px"><div style="position:absolute;left:4px;top:6px;width:7px;height:2px;background:#3a4a66"></div></div>
<div class="a zc" style="left:1002px"><div style="position:absolute;left:4px;top:6px;width:7px;height:2px;background:#3a4a66"></div><div style="position:absolute;left:6px;top:4px;width:2px;height:7px;background:#3a4a66"></div></div>
<svg class="a" style="left:949px;top:722px" width="10" height="14" viewBox="0 0 10 14"><path d="M0.5 0.5h8v8.5l-4 4.5-4-4.5z" fill="#eef3fa" stroke="#4c6796"/><path d="M4.5 3v5" stroke="#8ea3c4"/></svg>

<!-- taskbar -->
<div class="a tbtn" style="left:2px;width:55px"></div>
<svg class="a" style="left:4px;top:746px" width="16" height="17" viewBox="0 0 16 17"><path d="M3 2.5q2.5-1.5 5 0l-1.2 5.5q-2.5-1.5-5 0z" fill="#f2622a"/><path d="M9 2.8q3-1.2 6 0.8l-1.2 5.2q-3-1.8-6-0.6z" fill="#82c341"/><path d="M1.6 9q2.5-1.5 5 0l-1.2 5.5q-2.5-1.5-5 0z" fill="#2e9be6"/><path d="M7.6 9.2q3-1.2 6 0.6l-1.2 5.5q-3-1.8-6-0.6z" fill="#f9c323"/></svg>
<div class="a" style="left:20px;top:748px;font-size:12.5px;font-weight:bold;color:#000;letter-spacing:0px">Inicio</div>
<svg class="a" style="left:64px;top:748px" width="15" height="14" viewBox="0 0 15 14"><rect x="0.5" y="1.5" width="14" height="11" fill="#3a78d8" stroke="#23408a"/><rect x="1" y="10" width="13" height="2" fill="#203050"/></svg>
<svg class="a" style="left:87px;top:747px" width="16" height="16" viewBox="0 0 16 16"><rect x="0.5" y="0.5" width="15" height="15" fill="#fff" stroke="#5a78c0" stroke-width="1.5"/><path d="M3 13Q11 12 13 3" fill="none" stroke="#f09030" stroke-width="2.5"/><path d="M2 9Q5 4 9 2" fill="none" stroke="#8ab0e0" stroke-width="1.5"/></svg>
<svg class="a" style="left:110px;top:748px" width="15" height="15" viewBox="0 0 15 15"><circle cx="7.5" cy="7.5" r="7" fill="#e23a2e"/><path d="M7.5 7.5L1.4 4A7 7 0 0 0 5 14z" fill="#2f9e44"/><path d="M7.5 7.5L5 14A7 7 0 0 0 14.5 7.5z" fill="#f6c026"/><path d="M7.5 7.5L14.5 7.5A7 7 0 0 0 13.5 4z" fill="#f6c026"/><circle cx="7.5" cy="7.5" r="3.3" fill="#fff"/><circle cx="7.5" cy="7.5" r="2.5" fill="#3b7ddd"/></svg>
<div class="a" style="left:145px;top:746px;font-size:10px;font-weight:bold;color:#000">&#187;</div>
<div class="a tbtn" style="left:157px;width:90px"></div><svg class="a" style="left:162px;top:748px" width="14" height="15" viewBox="0 0 14 15"><rect x="0.5" y="0.5" width="13" height="14" fill="#fff" stroke="#333"/><rect x="1" y="1" width="12" height="3" fill="#3a64b0"/><path d="M4 8l-2 2 2 2M10 8l2 2-2 2" stroke="#c03030" fill="none"/></svg><div class="a ttx" style="left:181px;font-weight:normal">4 Java(T...</div><svg class="a" style="left:235px;top:755px" width="6" height="3"><path d="M0 0h6L3 3z" fill="#000"/></svg>
<div class="a tbtn" style="left:250px;width:90px"></div><svg class="a" style="left:254px;top:747px" width="14" height="16" viewBox="0 0 14 16"><path d="M1 2h5l1 2h6v11H1z" fill="#f0d070" stroke="#c8a040"/><path d="M1 5h12v10H1z" fill="#f8e090"/></svg><div class="a ttx" style="left:274px;font-weight:normal">4 Explor...</div><svg class="a" style="left:328px;top:755px" width="6" height="3"><path d="M0 0h6L3 3z" fill="#000"/></svg>
<div class="a tbtn act" style="left:342px;width:90px"></div><svg class="a" style="left:347px;top:747px" width="15" height="16" viewBox="0 0 15 16"><rect x="2.5" y="1.5" width="12" height="14" rx="1" fill="#e8f0fb" stroke="#4a6cb0"/><rect x="0.5" y="4.5" width="10" height="9" fill="#3a64b8" rx="1"/><text x="1.5" y="12" font-size="8" font-style="italic" font-weight="bold" font-family="Liberation Serif" fill="#fff">W</text></svg><div class="a ttx" style="left:366px;font-weight:bold">4 Micro...</div><svg class="a" style="left:420px;top:755px" width="6" height="3"><path d="M0 0h6L3 3z" fill="#000"/></svg>
<div class="a tbtn" style="left:435px;width:91px"></div><svg class="a" style="left:440px;top:747px" width="15" height="16" viewBox="0 0 15 16"><rect x="2.5" y="1.5" width="12" height="14" rx="1" fill="#fbe8e0" stroke="#d05a30"/><rect x="0.5" y="4.5" width="10" height="9" fill="#e0603a" rx="1"/><circle cx="6" cy="9" r="2.5" fill="none" stroke="#fff" stroke-width="1.5"/></svg><div class="a ttx" style="left:459px;font-weight:normal">4 Micros...</div><svg class="a" style="left:514px;top:755px" width="6" height="3"><path d="M0 0h6L3 3z" fill="#000"/></svg>
<div class="a tbtn" style="left:529px;width:90px"></div><svg class="a" style="left:533px;top:748px" width="15" height="15" viewBox="0 0 15 15"><circle cx="7.5" cy="7.5" r="7" fill="#e23a2e"/><path d="M7.5 7.5L1.4 4A7 7 0 0 0 5 14z" fill="#2f9e44"/><path d="M7.5 7.5L5 14A7 7 0 0 0 14.5 7.5z" fill="#f6c026"/><path d="M7.5 7.5L14.5 7.5A7 7 0 0 0 13.5 4z" fill="#f6c026"/><circle cx="7.5" cy="7.5" r="3.3" fill="#fff"/><circle cx="7.5" cy="7.5" r="2.5" fill="#3b7ddd"/></svg><div class="a ttx" style="left:553px;font-weight:normal">Anatomía ...</div>
<div class="a tbtn" style="left:622px;width:90px"></div><svg class="a" style="left:627px;top:747px" width="15" height="16" viewBox="0 0 15 16"><rect x="2.5" y="1.5" width="12" height="14" rx="1" fill="#e6f4e6" stroke="#3a9040"/><rect x="0.5" y="4.5" width="10" height="9" fill="#e8f6e8" stroke="#3a9040" rx="1"/><text x="2" y="12.5" font-size="9" font-weight="bold" font-family="Liberation Sans" fill="#207a28">x</text></svg><div class="a ttx" style="left:646px;font-weight:normal">Microsoft ...</div>
<div class="a tbtn" style="left:715px;width:90px"></div><svg class="a" style="left:719px;top:747px" width="16" height="16" viewBox="0 0 16 16"><rect x="0.5" y="0.5" width="15" height="15" fill="#fff" stroke="#5a78c0" stroke-width="1.5"/><path d="M3 13Q11 12 13 3" fill="none" stroke="#f09030" stroke-width="2.5"/><path d="M2 9Q5 4 9 2" fill="none" stroke="#8ab0e0" stroke-width="1.5"/></svg><div class="a ttx" style="left:739px;font-weight:normal">Calendari...</div>
<div class="a" style="left:821px;top:749px;font-size:12px;color:#000">ES</div>
<div class="a" style="left:841px;top:745px;width:2px;height:20px;border-left:1px solid #808080;border-right:1px solid #fff"></div>
<div class="a" style="left:845px;top:744px;width:177px;height:22px;border:1px solid;border-color:#808080 #fff #fff #808080"></div>
<div class="a" style="left:849px;top:747px;font-size:12px;font-weight:bold;color:#000;letter-spacing:-1px">&#171;</div>
<svg class="a" style="left:864px;top:747px" width="15" height="15" viewBox="0 0 15 15"><rect x="0" y="0" width="7" height="7" fill="#e8a020"/><rect x="7" y="0" width="8" height="7" fill="#2a8a3a"/><rect x="0" y="7" width="7" height="8" fill="#2a6ac8"/><rect x="7" y="7" width="8" height="8" fill="#d83a20"/><path d="M0 15L15 0" stroke="#f0c030" stroke-width="2"/></svg>
<svg class="a" style="left:881px;top:747px" width="16" height="15" viewBox="0 0 16 15"><rect x="1.5" y="0.5" width="13" height="9" fill="#aaa" stroke="#333"/><path d="M0.5 10.5h15v4H0.5z" fill="#ccc" stroke="#333"/></svg>
<svg class="a" style="left:899px;top:746px" width="16" height="16" viewBox="0 0 16 16"><rect x="0" y="0" width="16" height="16" fill="#1a6a4a"/><rect x="0" y="0" width="16" height="8" fill="#4a9ab8"/><text x="9" y="7" font-size="7" font-weight="bold" font-family="Liberation Sans" fill="#fff">B</text><text x="1" y="15" font-size="6" font-family="Liberation Sans" fill="#fff">LAN</text></svg>
<svg class="a" style="left:928px;top:746px" width="15" height="16" viewBox="0 0 15 16"><rect x="7.5" y="2.5" width="7" height="12" fill="#c8f0c8" stroke="#555"/><path d="M1.5 4.5h6v5q-3 3-6 0z" fill="#fff" stroke="#555"/><path d="M3 1v3M6 1v3M4.5 12v4" stroke="#555"/></svg>
<svg class="a" style="left:945px;top:746px" width="16" height="16" viewBox="0 0 16 16"><rect x="3.5" y="0.5" width="10" height="8" fill="#3a78d8" stroke="#223a6a"/><rect x="0.5" y="5.5" width="10" height="8" fill="#5a98e8" stroke="#223a6a"/><circle cx="11" cy="11" r="4.5" fill="#3ab04a"/><path d="M8 9q3 1 6 0M8 13q3-1 6 0" stroke="#2a70c8"/></svg>
<svg class="a" style="left:963px;top:746px" width="17" height="16" viewBox="0 0 17 16"><path d="M1.5 5.5h3l4-4v12l-4-4h-3z" fill="#eee" stroke="#555"/><circle cx="12" cy="11" r="4.5" fill="#e02020"/><path d="M9 8l6 6" stroke="#fff" stroke-width="1.8"/></svg>
<div class="a" style="left:986px;top:749px;font-size:12px;color:#000;letter-spacing:-0.2px">15:57</div>

<!-- title bar content -->
<div class="a" style="left:434px;top:8px;font-size:11px;letter-spacing:0.5px;color:#5b6b82;white-space:nowrap">Documento2 - <span style="color:#3f5b88">Microsoft Word</span></div>
<div class="a" style="left:976px;top:11px;width:7px;height:2px;background:#5a6478"></div>
<svg class="a" style="left:993px;top:4px" width="11" height="10" viewBox="0 0 11 10"><rect x="2" y="1" width="8" height="2" fill="#5d6880"/><rect x="8.5" y="1" width="1.5" height="6" fill="#5d6880"/><rect x="0.5" y="4.5" width="8" height="4.5" fill="none" stroke="#5d6880"/><rect x="0" y="4" width="9" height="2" fill="#5d6880"/></svg>
<svg class="a" style="left:1011px;top:5px" width="10" height="9" viewBox="0 0 10 9"><path d="M1 0.8L9 8.2M9 0.8L1 8.2" stroke="#646e84" stroke-width="2.4"/></svg>

<!-- QAT -->
<svg class="a" style="left:0;top:0" width="170" height="26" viewBox="0 0 170 26"><defs><linearGradient id="qg" x1="0" y1="0" x2="0" y2="1"><stop offset="0" stop-color="#e2ebf7"/><stop offset="0.5" stop-color="#d2e0f2"/><stop offset="1" stop-color="#c6d8ef"/></linearGradient></defs><path d="M38.5 2.5H153a10.5 10.5 0 0 1 0 21H47.5A25 25 0 0 0 38.5 2.5z" fill="url(#qg)" stroke="#a6bddb"/></svg>
<!-- save -->
<svg class="a" style="left:53px;top:6px" width="15" height="15" viewBox="0 0 15 15"><defs><linearGradient id="sv" x1="0" y1="0" x2="1" y2="1"><stop offset="0" stop-color="#7a7ad8"/><stop offset="1" stop-color="#3a3a98"/></linearGradient></defs><rect x="0.5" y="0.5" width="14" height="14" fill="url(#sv)" stroke="#2c2c7a"/><rect x="3" y="1" width="9" height="6.5" fill="#f4f6fc"/><rect x="4" y="10" width="7" height="4.5" fill="#222250"/><rect x="7" y="11" width="2.5" height="2.5" fill="#e8e8f0"/></svg>
<!-- undo -->
<svg class="a" style="left:75px;top:5px" width="16" height="16" viewBox="0 0 16 16"><path d="M3.5 3.5v5h5" fill="none" stroke="#3a6fc4" stroke-width="2.4"/><path d="M4.5 8C6 4.5 11 4 12.5 7.5 13.5 10 12 12.5 9.5 13.5" fill="none" stroke="#3a6fc4" stroke-width="2.6"/></svg>
<svg class="a" style="left:93px;top:12px" width="6" height="4"><path d="M0 0h6L3 3z" fill="#4d6185"/></svg>
<!-- redo -->
<svg class="a" style="left:106px;top:4px" width="17" height="17" viewBox="0 0 17 17"><path d="M6 4.2A5.2 5.2 0 1 0 12.2 5" fill="none" stroke="#3a6cc8" stroke-width="2.8"/><path d="M9 1.5L15 2.5 12.5 8z" fill="#3a6cc8"/></svg>
<!-- omega -->
<div class="a" style="left:128px;top:4px;font-size:16px;font-weight:bold;color:#3766bc;font-family:'Liberation Sans',sans-serif">&#937;</div>
<svg class="a" style="left:146px;top:12px" width="6" height="4"><path d="M0 0h6L3 3z" fill="#4d6185"/></svg>
<!-- customize -->
<svg class="a" style="left:171px;top:8px" width="6" height="7"><rect x="0" y="0" width="6" height="1.3" fill="#1c3768"/><path d="M0 3h6L3 6z" fill="#1c3768"/></svg>

<!-- office button -->
<div class="a" style="left:4px;top:4px;width:37px;height:37px;border-radius:50%;background:radial-gradient(circle at 50% 45%,#ffffff 0,#f4f6f9 45%,#d8dee6 72%,#e8edf3 88%,#c8d0da 100%);border:1px solid #8a99ae;box-shadow:0 0 0 1px rgba(255,255,255,.7)"></div>
<svg class="a" style="left:0;top:0" width="46" height="46" viewBox="0 0 46 46"><defs>
<linearGradient id="lr" x1="0" y1="0" x2="1" y2="1"><stop offset="0" stop-color="#b8200c"/><stop offset="1" stop-color="#f07020"/></linearGradient>
<linearGradient id="ly" x1="0" y1="0" x2="1" y2="1"><stop offset="0" stop-color="#f8d050"/><stop offset="1" stop-color="#e89a10"/></linearGradient>
<linearGradient id="lg" x1="0" y1="0" x2="1" y2="1"><stop offset="0" stop-color="#8cc850"/><stop offset="1" stop-color="#3a8a20"/></linearGradient></defs>
<path d="M21.6 18V13.8Q21.6 12.4 20.2 12.4H13.8Q12.4 12.4 12.4 13.8V20.2Q12.4 21.6 13.8 21.6H18" fill="none" stroke="url(#lr)" stroke-width="2.8"/>
<path d="M25 19.5V18.2Q25 17 26.2 17H28.8Q30 17 30 18.2V20.3Q30 21.5 28.8 21.5H27.5" fill="none" stroke="#2f7fd0" stroke-width="2"/>
<path d="M18.5 25.4H15.8Q14.4 25.4 14.4 26.8V30.7Q14.4 32.1 15.8 32.1H20.2Q21.6 32.1 21.6 30.7V28.5" fill="none" stroke="url(#ly)" stroke-width="2.8"/>
<path d="M28.5 25.4H30.2Q31.6 25.4 31.6 26.8V29.7Q31.6 31.1 30.2 31.1H26.8Q25.4 31.1 25.4 29.7V28.5" fill="none" stroke="url(#lg)" stroke-width="2.8"/>
<circle cx="21" cy="21.3" r="1.1" fill="#e06a30"/><circle cx="25.4" cy="21.3" r="1.1" fill="#2f7fd0"/><circle cx="21" cy="25.4" r="1.1" fill="#f0c040"/><circle cx="25.4" cy="25.4" r="1.1" fill="#5aa83a"/>
</svg>

<!-- tabs -->
<div class="a" style="left:48px;top:27px;width:52px;height:24px;border:1px solid #a2bde3;border-bottom:none;border-radius:3px 3px 0 0;background:linear-gradient(#f6f9fd,#e7eff9 60%,#dfe8f3)"></div>
<div class="a tab" style="left:59px">Inicio</div>
<div class="a tab" style="left:115px">Insertar</div>
<div class="a tab" style="left:184px">Diseño de página</div>
<div class="a tab" style="left:304px">Referencias</div>
<div class="a tab" style="left:393px">Correspondencia</div>
<div class="a tab" style="left:510px">Revisar</div>
<div class="a tab" style="left:574px">Vista</div>
<!-- help -->
<div class="a" style="left:1007px;top:31px;width:13px;height:13px;border-radius:50%;background:radial-gradient(circle at 40% 30%,#7fb0f8,#2a5cc8 55%,#1a44a8);border:1px solid #fff;box-shadow:0 0 0 1px #3a5a9a;color:#fff;font-size:10px;font-weight:bold;text-align:center;line-height:11px">?</div>

<!-- document text -->
<div class="a" style="left:297px;top:176px;width:186px;height:22px;background:#ffff00"></div>
<div class="a doc" id="l1" style="left:297px;top:178px;transform:scaleX(1.042)">Ulcera corneal bacteriana:</div>
<div class="a doc" id="l2" style="left:354px;top:218px;transform:scaleX(1.014)">Signos son el ojo rojo profundo, mancha blanca grisacea en la superficie</div>
<div class="a doc" id="l3" style="left:354px;top:243px;transform:scaleX(1.017)">corneal y a veces el hipopion.</div>
<svg class="a" style="left:348px;top:195px" width="55" height="3" shape-rendering="crispEdges"><path d="M0 2h1v1h-1zM1 1h1v1h-1zM2 0h1v1h-1zM3 1h1v1h-1zM4 2h1v1h-1zM5 1h1v1h-1zM6 0h1v1h-1zM7 1h1v1h-1zM8 2h1v1h-1zM9 1h1v1h-1zM10 0h1v1h-1zM11 1h1v1h-1zM12 2h1v1h-1zM13 1h1v1h-1zM14 0h1v1h-1zM15 1h1v1h-1zM16 2h1v1h-1zM17 1h1v1h-1zM18 0h1v1h-1zM19 1h1v1h-1zM20 2h1v1h-1zM21 1h1v1h-1zM22 0h1v1h-1zM23 1h1v1h-1zM24 2h1v1h-1zM25 1h1v1h-1zM26 0h1v1h-1zM27 1h1v1h-1zM28 2h1v1h-1zM29 1h1v1h-1zM30 0h1v1h-1zM31 1h1v1h-1zM32 2h1v1h-1zM33 1h1v1h-1zM34 0h1v1h-1zM35 1h1v1h-1zM36 2h1v1h-1zM37 1h1v1h-1zM38 0h1v1h-1zM39 1h1v1h-1zM40 2h1v1h-1zM41 1h1v1h-1zM42 0h1v1h-1zM43 1h1v1h-1zM44 2h1v1h-1zM45 1h1v1h-1zM46 0h1v1h-1zM47 1h1v1h-1zM48 2h1v1h-1zM49 1h1v1h-1zM50 0h1v1h-1zM51 1h1v1h-1zM52 2h1v1h-1zM53 1h1v1h-1zM54 0h1v1h-1z" fill="#d82424"/></svg><svg class="a" style="left:697px;top:236px" width="60" height="3" shape-rendering="crispEdges"><path d="M0 2h1v1h-1zM1 1h1v1h-1zM2 0h1v1h-1zM3 1h1v1h-1zM4 2h1v1h-1zM5 1h1v1h-1zM6 0h1v1h-1zM7 1h1v1h-1zM8 2h1v1h-1zM9 1h1v1h-1zM10 0h1v1h-1zM11 1h1v1h-1zM12 2h1v1h-1zM13 1h1v1h-1zM14 0h1v1h-1zM15 1h1v1h-1zM16 2h1v1h-1zM17 1h1v1h-1zM18 0h1v1h-1zM19 1h1v1h-1zM20 2h1v1h-1zM21 1h1v1h-1zM22 0h1v1h-1zM23 1h1v1h-1zM24 2h1v1h-1zM25 1h1v1h-1zM26 0h1v1h-1zM27 1h1v1h-1zM28 2h1v1h-1zM29 1h1v1h-1zM30 0h1v1h-1zM31 1h1v1h-1zM32 2h1v1h-1zM33 1h1v1h-1zM34 0h1v1h-1zM35 1h1v1h-1zM36 2h1v1h-1zM37 1h1v1h-1zM38 0h1v1h-1zM39 1h1v1h-1zM40 2h1v1h-1zM41 1h1v1h-1zM42 0h1v1h-1zM43 1h1v1h-1zM44 2h1v1h-1zM45 1h1v1h-1zM46 0h1v1h-1zM47 1h1v1h-1zM48 2h1v1h-1zM49 1h1v1h-1zM50 0h1v1h-1zM51 1h1v1h-1zM52 2h1v1h-1zM53 1h1v1h-1zM54 0h1v1h-1zM55 1h1v1h-1zM56 2h1v1h-1zM57 1h1v1h-1zM58 0h1v1h-1zM59 1h1v1h-1z" fill="#d82424"/></svg><svg class="a" style="left:354px;top:260px" width="55" height="3" shape-rendering="crispEdges"><path d="M0 2h1v1h-1zM1 1h1v1h-1zM2 0h1v1h-1zM3 1h1v1h-1zM4 2h1v1h-1zM5 1h1v1h-1zM6 0h1v1h-1zM7 1h1v1h-1zM8 2h1v1h-1zM9 1h1v1h-1zM10 0h1v1h-1zM11 1h1v1h-1zM12 2h1v1h-1zM13 1h1v1h-1zM14 0h1v1h-1zM15 1h1v1h-1zM16 2h1v1h-1zM17 1h1v1h-1zM18 0h1v1h-1zM19 1h1v1h-1zM20 2h1v1h-1zM21 1h1v1h-1zM22 0h1v1h-1zM23 1h1v1h-1zM24 2h1v1h-1zM25 1h1v1h-1zM26 0h1v1h-1zM27 1h1v1h-1zM28 2h1v1h-1zM29 1h1v1h-1zM30 0h1v1h-1zM31 1h1v1h-1zM32 2h1v1h-1zM33 1h1v1h-1zM34 0h1v1h-1zM35 1h1v1h-1zM36 2h1v1h-1zM37 1h1v1h-1zM38 0h1v1h-1zM39 1h1v1h-1zM40 2h1v1h-1zM41 1h1v1h-1zM42 0h1v1h-1zM43 1h1v1h-1zM44 2h1v1h-1zM45 1h1v1h-1zM46 0h1v1h-1zM47 1h1v1h-1zM48 2h1v1h-1zM49 1h1v1h-1zM50 0h1v1h-1zM51 1h1v1h-1zM52 2h1v1h-1zM53 1h1v1h-1zM54 0h1v1h-1z" fill="#d82424"/></svg><svg class="a" style="left:495px;top:260px" width="64" height="3" shape-rendering="crispEdges"><path d="M0 2h1v1h-1zM1 1h1v1h-1zM2 0h1v1h-1zM3 1h1v1h-1zM4 2h1v1h-1zM5 1h1v1h-1zM6 0h1v1h-1zM7 1h1v1h-1zM8 2h1v1h-1zM9 1h1v1h-1zM10 0h1v1h-1zM11 1h1v1h-1zM12 2h1v1h-1zM13 1h1v1h-1zM14 0h1v1h-1zM15 1h1v1h-1zM16 2h1v1h-1zM17 1h1v1h-1zM18 0h1v1h-1zM19 1h1v1h-1zM20 2h1v1h-1zM21 1h1v1h-1zM22 0h1v1h-1zM23 1h1v1h-1zM24 2h1v1h-1zM25 1h1v1h-1zM26 0h1v1h-1zM27 1h1v1h-1zM28 2h1v1h-1zM29 1h1v1h-1zM30 0h1v1h-1zM31 1h1v1h-1zM32 2h1v1h-1zM33 1h1v1h-1zM34 0h1v1h-1zM35 1h1v1h-1zM36 2h1v1h-1zM37 1h1v1h-1zM38 0h1v1h-1zM39 1h1v1h-1zM40 2h1v1h-1zM41 1h1v1h-1zM42 0h1v1h-1zM43 1h1v1h-1zM44 2h1v1h-1zM45 1h1v1h-1zM46 0h1v1h-1zM47 1h1v1h-1zM48 2h1v1h-1zM49 1h1v1h-1zM50 0h1v1h-1zM51 1h1v1h-1zM52 2h1v1h-1zM53 1h1v1h-1zM54 0h1v1h-1zM55 1h1v1h-1zM56 2h1v1h-1zM57 1h1v1h-1zM58 0h1v1h-1zM59 1h1v1h-1zM60 2h1v1h-1zM61 1h1v1h-1zM62 0h1v1h-1zM63 1h1v1h-1z" fill="#d82424"/></svg>
<div class="a" style="left:184px;top:283px;width:2px;height:21px;background:#000"></div>
</body></html>
